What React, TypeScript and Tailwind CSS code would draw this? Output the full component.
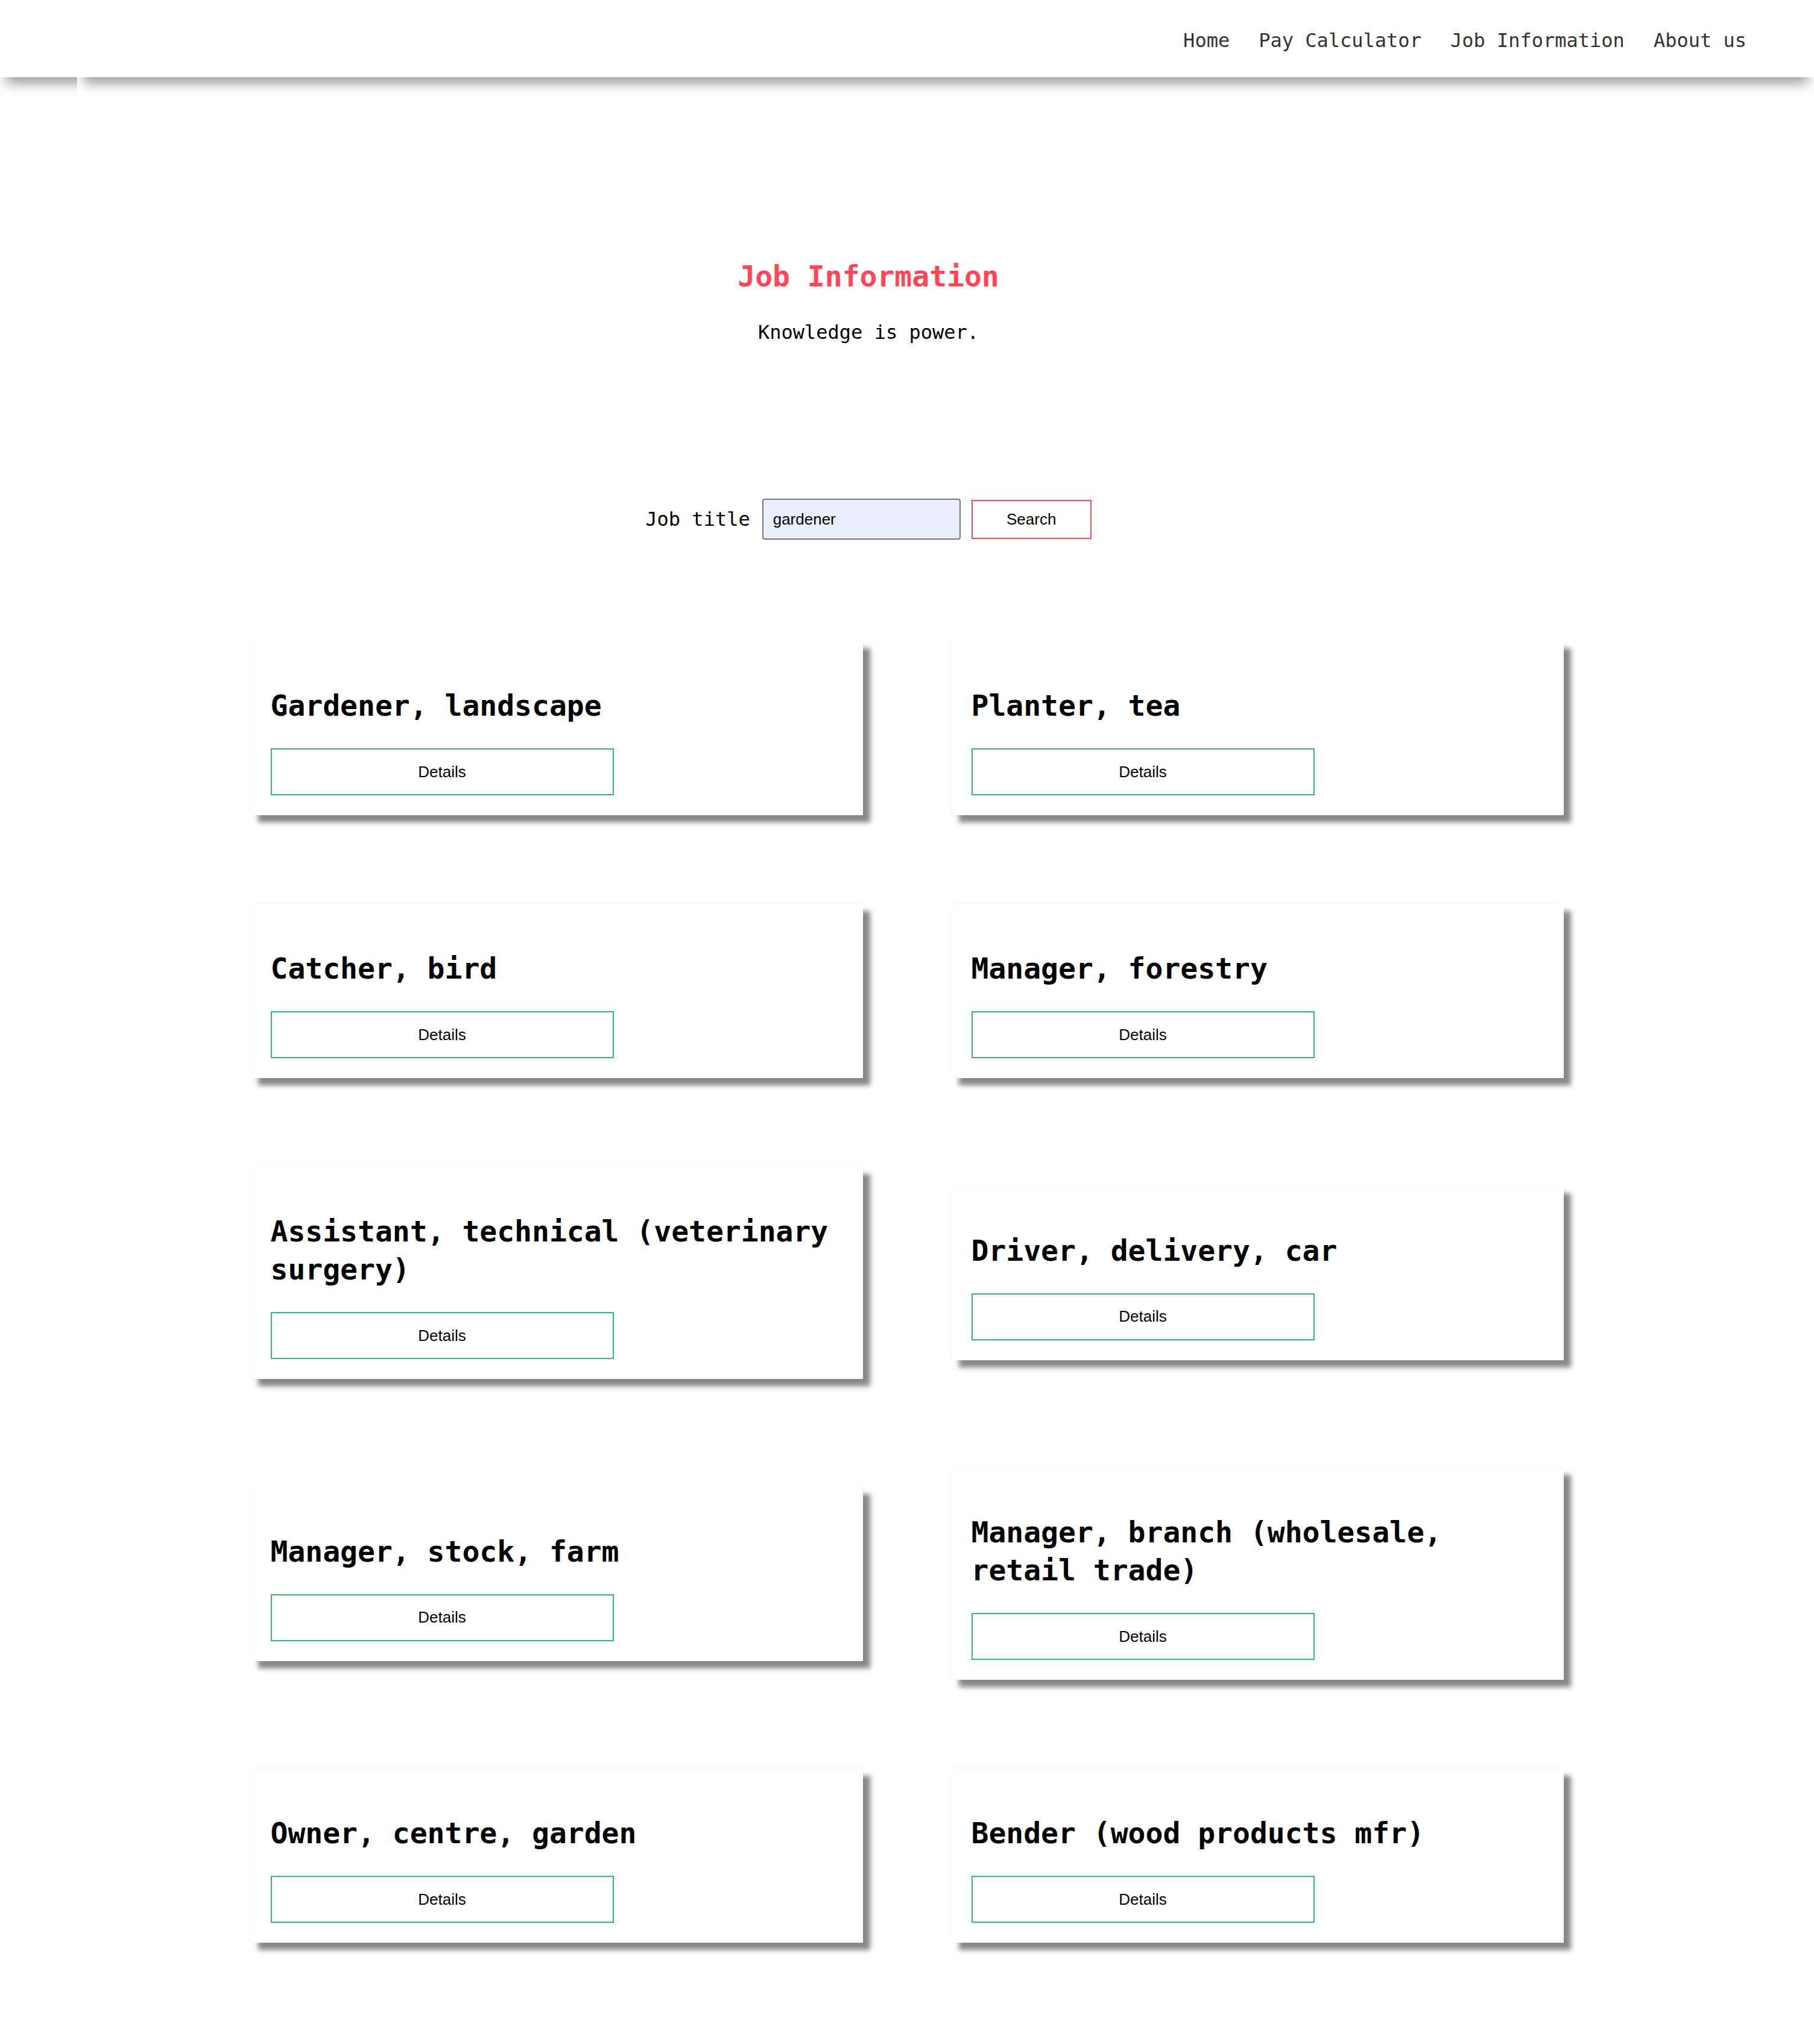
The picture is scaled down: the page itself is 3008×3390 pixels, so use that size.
import React from "react";

const jobs = [
  "Gardener, landscape",
  "Planter, tea",
  "Catcher, bird",
  "Manager, forestry",
  "Assistant, technical (veterinary surgery)",
  "Driver, delivery, car",
  "Manager, stock, farm",
  "Manager, branch (wholesale, retail trade)",
  "Owner, centre, garden",
  "Bender (wood products mfr)",
];

const mono = "font-['DejaVu_Sans_Mono','Liberation_Mono',monospace]";
const sans = "font-['Liberation_Sans',Arial,sans-serif]";

function JobCard({ title }: { title: string }) {
  return (
    <div className="bg-white px-[33px] pt-[76px] pb-[33px] shadow-[12px_12px_8px_#888,0_0_3px_rgba(0,0,0,0.06)]">
      <h2 className={`${mono} text-[48px] leading-[63px] font-bold text-black`}>{title}</h2>
      <button
        className={`${sans} block mt-[39px] w-[569px] h-[78px] border-2 border-[#3cb371] bg-white text-[26px] text-black`}
      >
        Details
      </button>
    </div>
  );
}

export default function App() {
  return (
    <div className={`min-h-[3390px] w-full bg-white ${mono}`}>
      {/* header: empty logo slot + nav, each carries its own drop shadow */}
      <header className="flex items-start h-[128px] w-full">
        {/* logo slot: sits above the nav's shadow, its own shadow cut at the right edge */}
        <div className="relative z-10 w-[129px] h-[170px] shrink-0 bg-white">
          <div className="w-[128px] h-[170px] overflow-hidden">
            <div className="w-[160px] h-[128px] bg-white shadow-[0_20px_20px_-10px_rgba(0,0,0,0.4)]" />
          </div>
        </div>
        <nav className="flex-1 h-[128px] bg-white shadow-[0_20px_20px_-10px_rgba(0,0,0,0.4)] flex justify-end pr-[112px] pt-[47px]">
          <ul className="flex gap-[48px] text-[32px] leading-[40px] text-[#333]">
            <li>Home</li>
            <li>Pay Calculator</li>
            <li>Job Information</li>
            <li>About us</li>
          </ul>
        </nav>
      </header>

      {/* intro + search */}
      <section className="w-[2880px] text-center pt-[299px]">
        <h1 className="text-[48px] leading-[63px] font-bold text-[#ff4757]">Job Information</h1>
        <p className="mt-[41px] text-[32px] leading-[40px] text-black">Knowledge is power.</p>

        <div className="mt-[256px] flex justify-center items-center">
          <label className="text-[32px] leading-[40px] text-black mr-[20px]">Job title</label>
          <input
            defaultValue="gardener"
            className={`${sans} w-[329px] h-[68px] rounded-[4px] border-2 border-[#767676] bg-[#e8f0fe] pl-[16px] text-[26px] text-black outline-none`}
          />
          <button
            className={`${sans} ml-[18px] w-[199px] h-[65px] border-2 border-[#ff4757] bg-white text-[26px] text-black`}
          >
            Search
          </button>
        </div>
      </section>

      {/* results */}
      <section className="mt-[168px] pb-[160px] grid grid-cols-[1015px_1015px] justify-center items-center gap-[147px]">
        {jobs.map((j) => (
          <JobCard key={j} title={j} />
        ))}
      </section>
    </div>
  );
}
